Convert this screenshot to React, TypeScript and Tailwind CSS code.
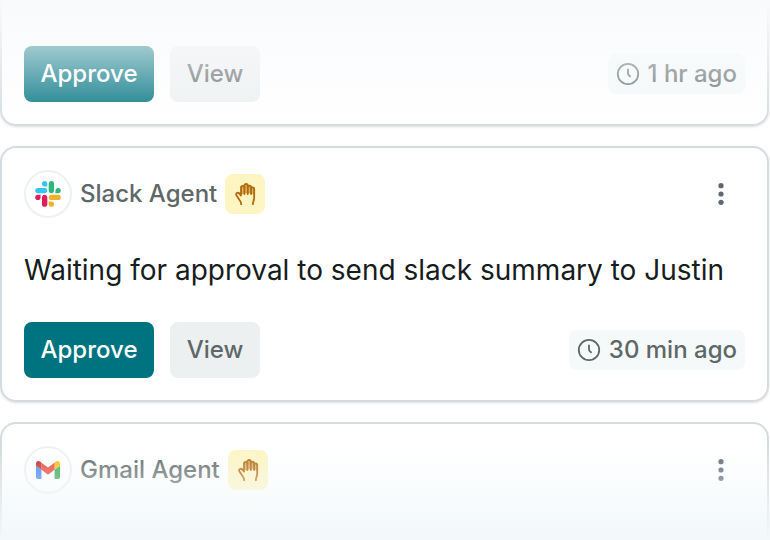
import type { ReactNode } from "react";

function SlackLogo() {
  return (
    <svg viewBox="0 0 127 127" className="size-[26px]" aria-hidden="true">
      <path
        fill="#E01E5A"
        d="M27.2 80c0 7.3-5.9 13.2-13.2 13.2C6.7 93.2.8 87.3.8 80c0-7.3 5.9-13.2 13.2-13.2h13.2V80zm6.6 0c0-7.3 5.9-13.2 13.2-13.2 7.3 0 13.2 5.9 13.2 13.2v33c0 7.3-5.9 13.2-13.2 13.2-7.3 0-13.2-5.9-13.2-13.2V80z"
      />
      <path
        fill="#36C5F0"
        d="M47 27c-7.3 0-13.2-5.9-13.2-13.2C33.8 6.5 39.7.6 47 .6c7.3 0 13.2 5.9 13.2 13.2V27H47zm0 6.7c7.3 0 13.2 5.9 13.2 13.2 0 7.3-5.9 13.2-13.2 13.2H13.9C6.6 60.1.7 54.2.7 46.9c0-7.3 5.9-13.2 13.2-13.2H47z"
      />
      <path
        fill="#2EB67D"
        d="M99.9 46.9c0-7.3 5.9-13.2 13.2-13.2 7.3 0 13.2 5.9 13.2 13.2 0 7.3-5.9 13.2-13.2 13.2H99.9V46.9zm-6.6 0c0 7.3-5.9 13.2-13.2 13.2-7.3 0-13.2-5.9-13.2-13.2V13.8C66.9 6.5 72.8.6 80.1.6c7.3 0 13.2 5.9 13.2 13.2v33.1z"
      />
      <path
        fill="#ECB22E"
        d="M80.1 99.8c7.3 0 13.2 5.9 13.2 13.2 0 7.3-5.9 13.2-13.2 13.2-7.3 0-13.2-5.9-13.2-13.2V99.8h13.2zm0-6.6c-7.3 0-13.2-5.9-13.2-13.2 0-7.3 5.9-13.2 13.2-13.2h33.1c7.3 0 13.2 5.9 13.2 13.2 0 7.3-5.9 13.2-13.2 13.2H80.1z"
      />
    </svg>
  );
}

function GmailLogo() {
  return (
    <svg viewBox="52 42 88 66" className="w-6" aria-hidden="true">
      <path fill="#4285f4" d="M58 108h14V74L52 59v43c0 3.32 2.69 6 6 6" />
      <path fill="#34a853" d="M120 108h14c3.32 0 6-2.69 6-6V59l-20 15" />
      <path fill="#fbbc04" d="M120 48v26l20-15v-8c0-7.42-8.47-11.65-14.4-7.2" />
      <path fill="#ea4335" d="M72 74V48l24 18 24-18v26L96 92" />
      <path fill="#c5221f" d="M52 51v8l20 15V48l-5.6-4.2c-5.94-4.45-14.4-.22-14.4 7.2" />
    </svg>
  );
}

function HandIcon() {
  return (
    <svg
      viewBox="0 0 24 24"
      className="size-6"
      fill="none"
      stroke="#b36a0b"
      strokeWidth="1.8"
      strokeLinecap="round"
      strokeLinejoin="round"
      aria-hidden="true"
    >
      <path
        stroke="none"
        fill="#b36a0b"
        fillOpacity="0.5"
        d="M8 13V5.6c0-1 .7-1.7 1.8-1.7h1.4C11.5 2.6 12 2 13 2s1.700.600 1.900 1.600h1.300c1 0 1.600.600 1.800 1.700h1.400c1.100 0 1.800.600 1.800 1.700V13c-3-2.200-10-2.200-13.200 0z"
      />
      <path d="M8.200 22.200c0-1.700-.6-2.800-1.700-4.200l-3-4.400c-.7-1-.4-2.100.4-2.600.9-.5 1.900-.2 2.500.6L8 13.600V5.600c0-1 .7-1.700 1.700-1.700s1.700.7 1.700 1.700" />
      <path d="M11.400 12V3.700c0-1 .7-1.700 1.700-1.700s1.700.7 1.700 1.700V12" />
      <path d="M14.800 5.200c0-1 .7-1.600 1.700-1.600s1.600.7 1.600 1.700V12" />
      <path d="M18.100 6.800c0-.9.7-1.500 1.600-1.500s1.500.7 1.500 1.700v8.200c0 1.600-.2 2.700-.8 4-.3.800-.5 1.700-.5 3" />
    </svg>
  );
}

function ClockIcon() {
  return (
    <svg
      viewBox="0 0 24 24"
      className="size-6"
      fill="none"
      stroke="currentColor"
      strokeWidth="1.8"
      strokeLinecap="round"
      strokeLinejoin="round"
      aria-hidden="true"
    >
      <circle cx="12" cy="12" r="10.2" />
      <path d="M12 7.500v4.200c0 .8.800 1.600 2 2.600" />
    </svg>
  );
}

function MenuButton({ label }: { label: string }) {
  return (
    <button type="button" aria-label={label} className="ml-auto flex size-12 items-center justify-center text-[#5f6773]">
      <svg viewBox="0 0 24 24" className="size-6" fill="currentColor" aria-hidden="true">
        <circle cx="12" cy="3.7" r="2.6" />
        <circle cx="12" cy="12" r="2.6" />
        <circle cx="12" cy="20.3" r="2.6" />
      </svg>
    </button>
  );
}

function AgentHeader({ name, logo }: { name: string; logo: ReactNode }) {
  return (
    <header className="flex items-center gap-2">
      <span className="flex size-12 shrink-0 items-center justify-center rounded-full border-2 border-[#eef1f2] bg-white">
        {logo}
      </span>
      <h2 className="text-2xl font-medium text-[#5e6868]">{name}</h2>
      <span className="flex size-10 items-center justify-center rounded-lg bg-[#fef5c3]">
        <HandIcon />
      </span>
      <MenuButton label={`${name} options`} />
    </header>
  );
}

function CardActions({ time }: { time: string }) {
  return (
    <div className="flex items-center gap-4">
      <button
        type="button"
        className="h-14 min-w-[130px] rounded-lg bg-[#007380] px-4 text-2xl font-medium text-white"
      >
        Approve
      </button>
      <button
        type="button"
        className="h-14 min-w-[90px] rounded-lg bg-[#edf0f1] px-4 text-2xl font-medium text-[#5e6868]"
      >
        View
      </button>
      <span className="ml-auto flex h-10 items-center gap-2 rounded-lg bg-[#f5f9fa] px-2 text-2xl font-medium text-[#5e6868]">
        <ClockIcon />
        {time}
      </span>
    </div>
  );
}

export default function App() {
  return (
    <main
      className="relative flex h-screen flex-col gap-5 overflow-hidden bg-white pr-px"
      style={{ fontFamily: "Inter, sans-serif" }}
    >
      <article className="rounded-b-2xl border-2 border-t-0 border-[#d5dcdf] px-[22px] pt-[46px] pb-[22px] shadow-sm">
        <CardActions time="1 hr ago" />
      </article>

      <article className="rounded-2xl border-2 border-[#d5dcdf] p-[22px] shadow-sm">
        <AgentHeader name="Slack Agent" logo={<SlackLogo />} />
        <p className="my-8 text-[28px] leading-10 text-[#171c1c]">
          Waiting for approval to send slack summary to Justin
        </p>
        <CardActions time="30 min ago" />
      </article>

      <article className="flex-1 rounded-t-2xl border-2 border-b-0 border-[#d5dcdf] p-[22px]">
        <AgentHeader name="Gmail Agent" logo={<GmailLogo />} />
      </article>

      {/* edge fades over the scrolled list */}
      <div className="pointer-events-none absolute inset-x-0 top-0 h-32 bg-linear-to-b from-[#f9fafc] to-white/0" />
      <div className="pointer-events-none absolute inset-x-0 bottom-0 h-24 bg-linear-to-t from-[#f3f8fa] to-[#f3f8fa]/0" />
    </main>
  );
}
